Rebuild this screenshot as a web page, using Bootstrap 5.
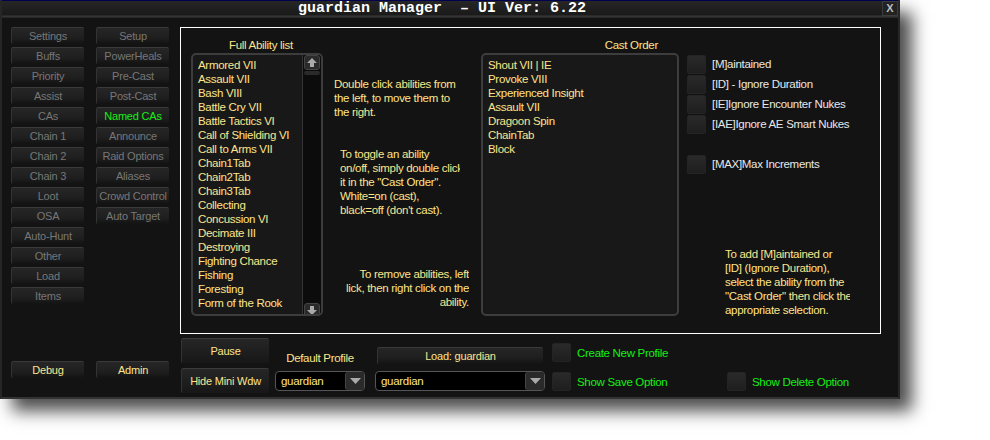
<!DOCTYPE html>
<html lang="en">
<head>
<meta charset="UTF-8">
<title>guardian Manager</title>
<link href="https://cdn.jsdelivr.net/npm/bootstrap@5.3.3/dist/css/bootstrap.min.css" rel="stylesheet">
<style>
    body { background: #fff; margin: 0; min-height: 440px; font-family: "Liberation Sans", Arial, sans-serif; font-size: 11.5px; letter-spacing: -.3px; line-height: 14px; color: #fde58c; }
    .ui-window { width: 900px; height: 399px; background: #131313; box-shadow: 12px 12px 16px rgba(0,0,0,.7); border-bottom: 2px solid #333; border-right: 2px solid #262626; border-left: 2px solid #262626; }
    .ui-title { height: 18px; background: linear-gradient(#000050 0 1px, #262626 1px, #1a1a1a 15px, #3a3a3a 16px, #222 18px); color: #fff; font: bold 15px/17px "Liberation Mono", monospace; letter-spacing: 0; white-space: pre; }
    .ui-close { width: 16px; height: 15px; margin-top: 1px; border: 1px solid #3c3c3c; background: #222; color: #bbb; font: bold 11px/13px "Liberation Sans", sans-serif; text-align: center; }
    .ui-body { padding: 9px 17px 0 9px; height: 378px; }
    .ui-nav { width: 73px; height: 354px; margin-right: 12px; flex: none; }
    .ui-nav + .ui-nav { margin-right: 11px; }
    .ui-btn { display: block; width: 100%; padding: 0; border: 0; border-top: 1px solid #3a3a3a; border-left: 1px solid #333; border-radius: 2px; background: linear-gradient(#262626, #1f1f1f 60%, #131313); color: #777; font-size: 11px; letter-spacing: -.2px; line-height: 16px; height: 17px; text-align: center; white-space: nowrap; }
    .ui-btn:hover, .ui-btn:active { color: #777; background: #222; }
    .ui-nav .ui-btn { margin-bottom: 3px; }
    .ui-nav .ui-btn.ui-on { color: #16ef16; }
    .ui-nav .ui-btn.ui-lit { color: #fde58c; }
    .ui-panel { width: 701px; height: 307px; border: 1px solid #fff; padding: 10px 10px 0 10px; }
    .ui-col-list { width: 132px; margin-right: 11px; flex: none; }
    .ui-col-help { width: 135px; margin-right: 12px; flex: none; }
    .ui-col-cast { width: 198px; margin-right: 8px; flex: none; }
    .ui-head { height: 15px; }
    .ui-head-a { padding-left: 38px; }
    .ui-head-b { text-align: right; padding-right: 21px; }
    .ui-list { height: 263px; border: 2px solid #3d3d3d; border-radius: 5px; background: rgba(255,255,255,.025); padding: 3px 0 0 5px; overflow: hidden; }
    .ui-list .list-group-item { background: none; border: 0; padding: 0; color: #fde58c; line-height: 14px; font-size: 11.5px; white-space: nowrap; border-radius: 0; }
    .ui-scroll { width: 19px; border-left: 1px solid #333; background: #0c0c0c; margin: -3px 0 0 0; height: 263px; flex: none; }
    .ui-arrow { width: 16px; height: 15px; margin: 0 auto; background: #2a2a2a; border: 1px solid #444; border-radius: 3px; display: flex; align-items: center; justify-content: center; }
    .ui-thumb { width: 16px; height: 4px; margin: 1px auto auto; background: #2a2a2a; border-radius: 2px; }
    .ui-help { margin: 0; white-space: pre; overflow: hidden; }
    .ui-help-a { margin-top: 39px; }
    .ui-help-b { margin-top: 28px; margin-left: 6px; width: 120px; }
    .ui-help-d { margin-left: 38px; width: 125px; }
    .ui-opt { height: 20px; color: #e8e8e8; white-space: nowrap; }
    .ui-opt-gap { margin-top: 20px; }
    .ui-tick { display: block; width: 19px; height: 19px; flex: none; border: 1px solid #242424; border-radius: 2px; background: linear-gradient(#2a2a2a, #1e1e1e); margin-right: 6px; padding: 0; }
    .ui-foot { margin-top: 4px; }
    .ui-foot-a { width: 88px; margin-left: 1px; margin-right: 6px; }
    .ui-foot-b { width: 90px; margin-right: 10px; }
    .ui-foot-c { width: 170px; margin-right: 7px; }
    .ui-foot-d { width: 175px; }
    .ui-label { height: 14px; margin: 13px 0 6px; text-align: center; }
    .ui-combo { height: 20px; border: 1px solid #555; border-radius: 4px; background: #000; color: #fde58c; padding-left: 5px; line-height: 18px; }
    .ui-drop { width: 19px; height: 18px; background: #2a2a2a; border-left: 1px solid #444; border-radius: 3px; display: flex; align-items: center; justify-content: center; }
    .ui-green { color: #16ef16; }
    .ui-big { height: 25px; line-height: 23px; background: linear-gradient(#262626, #171717); color: #fde58c; }
    .ui-big + .ui-big { margin-top: 5px; }
    .ui-big:hover, .ui-big:active { color: #fde58c; }
    .ui-load { width: 166px; height: 17px; margin: 9px 2px 7px; color: #fde58c; }
    .ui-load:hover, .ui-load:active { color: #fde58c; }
    .ui-row-a { height: 19px; margin: 5px 0 10px; }
    .ui-row-b { height: 19px; }
    .ui-row-c { height: 19px; margin: 34px 0 0; }
</style>
</head>
<body>
<div class="ui-window">
    <div class="ui-title d-flex">
        <div class="flex-grow-1 text-center">guardian Manager  – UI Ver: 6.22</div>
        <div class="ui-close">X</div>
    </div>

    <div class="ui-body d-flex">
        <!-- left buttons -->
        <div class="ui-nav d-flex flex-column">
            <button class="btn ui-btn">Settings</button>
            <button class="btn ui-btn">Buffs</button>
            <button class="btn ui-btn">Priority</button>
            <button class="btn ui-btn">Assist</button>
            <button class="btn ui-btn">CAs</button>
            <button class="btn ui-btn">Chain 1</button>
            <button class="btn ui-btn">Chain 2</button>
            <button class="btn ui-btn">Chain 3</button>
            <button class="btn ui-btn">Loot</button>
            <button class="btn ui-btn">OSA</button>
            <button class="btn ui-btn">Auto-Hunt</button>
            <button class="btn ui-btn">Other</button>
            <button class="btn ui-btn">Load</button>
            <button class="btn ui-btn">Items</button>
            <button class="btn ui-btn ui-lit mt-auto">Debug</button>
        </div>
        <div class="ui-nav d-flex flex-column">
            <button class="btn ui-btn">Setup</button>
            <button class="btn ui-btn">PowerHeals</button>
            <button class="btn ui-btn">Pre-Cast</button>
            <button class="btn ui-btn">Post-Cast</button>
            <button class="btn ui-btn ui-on">Named CAs</button>
            <button class="btn ui-btn">Announce</button>
            <button class="btn ui-btn">Raid Options</button>
            <button class="btn ui-btn">Aliases</button>
            <button class="btn ui-btn">Crowd Control</button>
            <button class="btn ui-btn">Auto Target</button>
            <button class="btn ui-btn ui-lit mt-auto">Admin</button>
        </div>

        <div>
            <div class="ui-panel d-flex">
                <div class="ui-col-list">
                    <div class="ui-head ui-head-a">Full Ability list</div>
                    <div class="ui-list d-flex justify-content-between pe-0">
                        <ul class="list-group">
                            <li class="list-group-item">Armored VII</li>
                            <li class="list-group-item">Assault VII</li>
                            <li class="list-group-item">Bash VIII</li>
                            <li class="list-group-item">Battle Cry VII</li>
                            <li class="list-group-item">Battle Tactics VI</li>
                            <li class="list-group-item">Call of Shielding VI</li>
                            <li class="list-group-item">Call to Arms VII</li>
                            <li class="list-group-item">Chain1Tab</li>
                            <li class="list-group-item">Chain2Tab</li>
                            <li class="list-group-item">Chain3Tab</li>
                            <li class="list-group-item">Collecting</li>
                            <li class="list-group-item">Concussion VI</li>
                            <li class="list-group-item">Decimate III</li>
                            <li class="list-group-item">Destroying</li>
                            <li class="list-group-item">Fighting Chance</li>
                            <li class="list-group-item">Fishing</li>
                            <li class="list-group-item">Foresting</li>
                            <li class="list-group-item">Form of the Rook</li>
                        </ul>
                        <div class="ui-scroll d-flex flex-column justify-content-between">
                            <div class="ui-arrow"><svg width="10" height="9" viewBox="0 0 10 9"><path d="M5 0 10 5H7V9H3V5H0Z" fill="#aaa"/></svg></div>
                            <div class="ui-thumb"></div>
                            <div class="ui-arrow"><svg width="10" height="9" viewBox="0 0 10 9"><path d="M5 9 10 4H7V0H3V4H0Z" fill="#aaa"/></svg></div>
                        </div>
                    </div>
                </div>

                <div class="ui-col-help d-flex flex-column">
                    <p class="ui-help ui-help-a">Double click abilities from
the left, to move them to
the right.</p>
                    <p class="ui-help ui-help-b">To toggle an ability
on/off, simply double click
it in the "Cast Order".
White=on (cast),
black=off (don't cast).</p>
                    <p class="ui-help text-end mt-auto mb-4">To remove abilities, left
lick, then right click on the
ability.</p>
                </div>

                <div class="ui-col-cast">
                    <div class="ui-head ui-head-b">Cast Order</div>
                    <ul class="list-group ui-list">
                        <li class="list-group-item">Shout VII | IE</li>
                        <li class="list-group-item">Provoke VIII</li>
                        <li class="list-group-item">Experienced Insight</li>
                        <li class="list-group-item">Assault VII</li>
                        <li class="list-group-item">Dragoon Spin</li>
                        <li class="list-group-item">ChainTab</li>
                        <li class="list-group-item">Block</li>
                    </ul>
                </div>

                <div class="flex-grow-1 d-flex flex-column pt-3">
                    <div class="ui-opt d-flex align-items-center"><span class="ui-tick"></span>[M]aintained</div>
                    <div class="ui-opt d-flex align-items-center"><span class="ui-tick"></span>[ID] - Ignore Duration</div>
                    <div class="ui-opt d-flex align-items-center"><span class="ui-tick"></span>[IE]Ignore Encounter Nukes</div>
                    <div class="ui-opt d-flex align-items-center"><span class="ui-tick"></span>[IAE]Ignore AE Smart Nukes</div>
                    <div class="ui-opt ui-opt-gap d-flex align-items-center"><span class="ui-tick"></span>[MAX]Max Increments</div>
                    <p class="ui-help ui-help-d mt-auto mb-3">To add [M]aintained or
[ID] (Ignore Duration),
select the ability from the
"Cast Order" then click the
appropriate selection.</p>
                </div>
            </div>

            <!-- profile controls under the panel -->
            <div class="ui-foot d-flex">
                <div class="ui-foot-a">
                    <button class="btn ui-btn ui-big">Pause</button>
                    <button class="btn ui-btn ui-big">Hide Mini Wdw</button>
                </div>
                <div class="ui-foot-b">
                    <div class="ui-label">Default Profile</div>
                    <div class="ui-combo d-flex justify-content-between">guardian<span class="ui-drop"><svg width="11" height="6" viewBox="0 0 11 6"><path d="M0 0H11L5.500 6Z" fill="#aaa"/></svg></span></div>
                </div>
                <div class="ui-foot-c">
                    <button class="btn ui-btn ui-load">Load: guardian</button>
                    <div class="ui-combo d-flex justify-content-between">guardian<span class="ui-drop"><svg width="11" height="6" viewBox="0 0 11 6"><path d="M0 0H11L5.500 6Z" fill="#aaa"/></svg></span></div>
                </div>
                <div class="ui-foot-d ui-green">
                    <div class="ui-row-a d-flex align-items-center"><span class="ui-tick"></span>Create New Profile</div>
                    <div class="ui-row-b d-flex align-items-center"><span class="ui-tick"></span>Show Save Option</div>
                </div>
                <div class="ui-green">
                    <div class="ui-row-c d-flex align-items-center"><span class="ui-tick"></span>Show Delete Option</div>
                </div>
            </div>
        </div>
    </div>
</div>
<script src="https://cdn.jsdelivr.net/npm/bootstrap@5.3.3/dist/js/bootstrap.bundle.min.js"></script>
</body>
</html>
